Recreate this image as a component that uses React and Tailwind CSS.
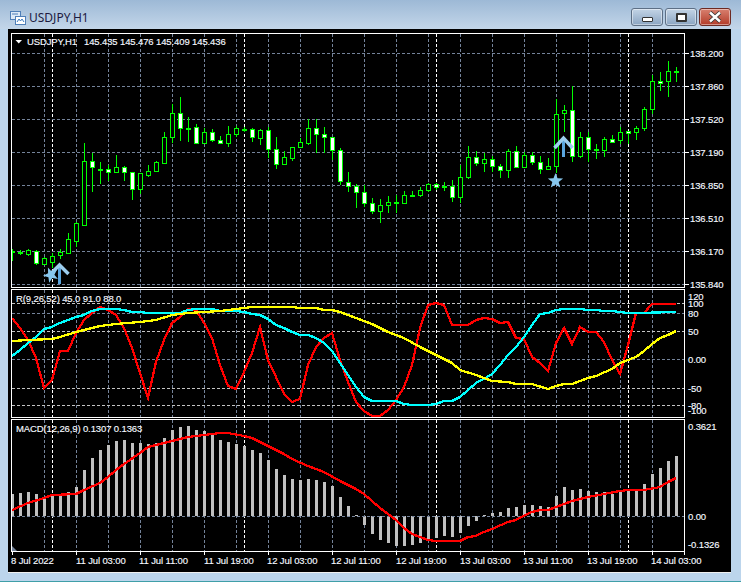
const FONT = { fontFamily: '"Liberation Sans", Arial, sans-serif' };

// high, low, body top, body bottom, type (1 white body, 0 hollow, 2 doji) - first candle at x=12, one every 8px
const candles = [
  [249,261,251,251,2],[250,255,252,253,2],[249,256,250,254,0],[250,265,251,263,1],[257,265,258,264,0],[253,268,256,262,0],
  [249,259,252,255,0],[233,253,239,253,0],[222,247,223,241,0],[143,226,161,225,0],[153,192,161,167,1],[162,184,169,169,2],
  [165,181,169,172,1],[155,173,167,172,0],[166,181,167,172,1],[172,200,172,189,1],[173,194,173,189,0],[165,177,171,175,0],
  [161,171,162,171,0],[132,163,137,163,0],[104,143,113,137,0],[97,141,113,128,1],[117,142,128,128,2],[124,144,127,143,1],
  [128,144,132,143,0],[129,142,132,140,1],[136,144,140,143,1],[126,147,134,143,0],[126,137,128,134,0],[127,132,129,129,2],
  [128,142,129,137,1],[129,145,130,138,0],[127,158,130,149,1],[137,169,149,164,1],[151,165,157,164,0],[147,161,147,158,0],
  [138,148,142,147,0],[119,145,128,143,0],[119,153,128,134,1],[127,153,134,137,1],[137,160,137,150,1],[148,185,150,181,1],
  [172,192,182,186,1],[184,208,186,192,1],[185,207,192,203,1],[198,214,203,211,1],[199,223,205,211,0],[196,213,202,205,0],
  [195,213,202,202,2],[191,204,195,203,0],[191,197,195,195,2],[187,197,190,195,0],[183,192,184,190,0],[183,190,184,187,1],
  [182,191,186,186,2],[180,202,186,197,1],[165,203,177,197,0],[146,179,157,177,0],[151,166,157,163,1],[153,172,159,163,0],
  [156,172,159,166,1],[164,178,166,170,1],[149,178,151,170,0],[146,167,151,167,1],[152,168,155,167,0],[152,165,155,162,1],
  [156,174,162,169,1],[158,169,166,169,0],[99,173,114,166,0],[105,132,110,113,0],[86,162,110,156,1],[132,158,137,156,0],
  [132,162,137,149,1],[144,159,149,149,2],[137,157,139,150,0],[135,143,139,142,1],[127,144,132,140,0],[131,144,131,133,1],
  [126,140,128,132,0],[107,131,109,128,0],[75,114,81,109,0],[72,91,81,83,1],[61,97,71,81,0],[67,82,71,71,2],
];

const red = "12,318 20,328 28,340 36,358 44,388 52,380 60,351 68,351 76,333 84,320 92,313 100,307 108,310 116,315 124,328 132,348 140,373 148,398 156,362 164,340 172,323 180,317 188,309 196,310 204,323 212,338 220,365 228,386 236,389 244,372 252,353 260,327 268,360 276,377 284,394 292,402 300,399 308,365 316,347 324,338 332,333 340,360 348,382 356,402 364,411 372,416 380,416 388,410 396,400 404,387 412,365 420,328 428,305 436,303 444,305 452,325 460,325 468,325 476,320 484,318 492,319 500,323 508,322 516,338 524,339 532,357 540,363 548,371 556,343 564,328 572,344 580,327 588,332 596,332 604,342 612,360 620,374 628,345 636,313 644,313 652,304 660,304 668,304 676,304";
const cyan = "12,356 20,350 28,343 36,337 44,329 52,327 60,323 68,320 76,317 84,315 92,311 100,309 108,309 116,309 124,310 132,312 140,312 148,313 156,313 172,313 180,313 188,310 196,309 212,309 220,311 236,311 244,312 252,314 260,315 268,319 276,325 284,328 292,332 300,335 308,335 316,338 324,343 332,351 340,363 348,375 356,387 364,397 372,401 396,401 404,404 412,405 428,405 436,404 444,401 452,401 460,397 468,390 476,383 484,379 492,374 500,365 508,355 516,347 524,337 532,325 540,314 548,313 556,310 564,309 580,309 588,310 596,310 604,311 612,311 620,312 628,313 636,313 676,312";
const yellow = "12,341 28,340 52,339 60,337 76,332 92,328 100,326 116,324 140,322 156,320 172,315 188,313 204,312 220,311 236,309 244,308 252,307 292,307 300,308 316,308 324,310 332,310 340,312 356,318 372,324 388,332 404,338 420,347 436,355 452,363 460,370 476,375 492,381 508,382 516,384 532,384 548,389 556,386 564,384 572,384 580,381 588,378 596,376 612,369 620,363 628,360 636,357 644,351 652,344 660,338 668,335 676,331";
const signal = "12,510 28,503 44,498 52,495 76,494 84,490 100,483 108,477 116,470 124,464 140,453 148,447 156,445 172,441 188,437 204,435 220,433 228,433 244,436 252,438 268,446 284,454 292,459 308,466 324,472 340,481 356,489 364,494 372,501 380,508 396,520 404,528 412,534 428,540 436,541 460,541 468,537 476,536 484,532 492,529 508,522 516,520 532,512 540,510 548,510 556,507 572,501 588,497 604,494 620,491 628,490 644,490 660,487 668,482 676,478";

// bar end in page y, zero line is y=516
const macd = [494,493,492,494,497,495,495,492,487,470,458,450,445,441,440,443,443,444,443,438,430,427,426,430,431,435,440,442,444,446,450,453,460,469,475,479,480,479,480,482,486,497,506,515,525,534,540,543,546,546,545,543,539,538,536,537,533,526,521,515,513,512,508,507,505,505,506,507,496,487,490,489,491,492,492,494,492,490,490,484,474,468,461,456];

const priceRows = [[53,"138.200"],[86,"137.860"],[119,"137.520"],[152,"137.190"],[185,"136.850"],[218,"136.510"],[251,"136.170"],[284,"135.840"]];
const vGrid = Array.from({ length: 20 }, (_, i) => 44 + i * 32);
const dayLines = [52, 244, 436, 628];
const timeLabels = [[11,"8 Jul 2022"],[76,"11 Jul 03:00"],[139,"11 Jul 11:00"],[204,"11 Jul 19:00"],[267,"12 Jul 03:00"],[331,"12 Jul 11:00"],[396,"12 Jul 19:00"],[460,"13 Jul 03:00"],[523,"13 Jul 11:00"],[587,"13 Jul 19:00"],[651,"14 Jul 03:00"]];
const ticks = [12, 76, 140, 204, 268, 332, 396, 460, 524, 588, 652, 684];

const GRAY = "#74839a";

function Grid({ y1, y2 }) {
  return (
    <g shapeRendering="crispEdges">
      {vGrid.map((x) => (
        <line key={x} x1={x + 0.5} x2={x + 0.5} y1={y1} y2={y2} stroke={GRAY} strokeDasharray="3 2" />
      ))}
      {dayLines.map((x) => (
        <line key={x} x1={x + 0.5} x2={x + 0.5} y1={y1} y2={y2} stroke="#ffffff" strokeDasharray="3 2" />
      ))}
    </g>
  );
}

function HLine({ y, color = GRAY }) {
  return <line x1={12} x2={684} y1={y + 0.5} y2={y + 0.5} stroke={color} strokeDasharray="3 2" shapeRendering="crispEdges" />;
}

function Label({ x, y, children }) {
  return (
    <text x={x} y={y + 3.5} fill="#f4f8ff" stroke="#f4f8ff" strokeWidth="0.15" fontSize="9.5" letterSpacing="-0.12" style={FONT}>
      {children}
    </text>
  );
}

function Frame({ top, bottom }) {
  return (
    <rect x={11.5} y={top + 0.5} width={673} height={bottom - top} fill="none" stroke="#ffffff" shapeRendering="crispEdges" />
  );
}

function Candle({ c, i }) {
  const x = 12 + i * 8;
  const [hi, lo, top, bot, type] = c;
  return (
    <g shapeRendering="crispEdges">
      <rect x={x} y={hi} width={1} height={lo - hi} fill="#00ff00" />
      {type === 2 ? (
        <rect x={Math.max(x - 2, 12)} y={top} width={x === 12 ? 3 : 5} height={2} fill="#00ff00" />
      ) : (
        <rect x={x - 1.5} y={top + 0.5} width={4} height={bot - top} fill={type === 1 ? "#ffffff" : "#000000"} stroke="#00ff00" />
      )}
    </g>
  );
}

function UpArrow({ x, tip, wing, end }) {
  return (
    <g fill="none">
      <rect x={x - 1} y={tip + 3} width={3} height={end - tip - 3} fill="#5aa5de" />
      <polyline points={`${x - 8.5},${wing} ${x + 0.5},${tip + 2} ${x + 9.5},${wing}`} stroke="#9ccdee" strokeWidth="3.5" />
    </g>
  );
}

function Star({ cx, cy, rot = 0 }) {
  const pts = [];
  for (let i = 0; i < 10; i++) {
    const r = i % 2 === 0 ? 8 : 3.4;
    const a = (Math.PI / 5) * i - Math.PI / 2 + rot;
    pts.push(`${(cx + r * Math.cos(a)).toFixed(1)},${(cy + r * Math.sin(a)).toFixed(1)}`);
  }
  return <polygon points={pts.join(" ")} fill="#87c7ee" />;
}

function MainPane() {
  return (
    <svg width="723" height="259" viewBox="8 29 723 259" className="block">
      <Grid y1={34} y2={287} />
      <g>{priceRows.map(([y]) => <HLine key={y} y={y} />)}</g>
      {candles.map((c, i) => <Candle key={i} c={c} i={i} />)}
      <UpArrow x={59} tip={263} wing={274} end={284} />
      <UpArrow x={563} tip={136} wing={148} end={157} />
      <Star cx={51} cy={275} rot={-0.4} />
      <Star cx={555.5} cy={181} />
      <Frame top={33} bottom={287} />
      <polygon points="15.5,40 22,40 18.75,43.5" fill="#ffffff" />
      <Label x={27} y={41}>USDJPY,H1</Label>
      <Label x={84} y={41}>145.435 145.476 145.409 145.436</Label>
      {priceRows.map(([y, t]) => (
        <g key={t}>
          <line x1={685} x2={689} y1={y + 0.5} y2={y + 0.5} stroke="#fff" shapeRendering="crispEdges" />
          <Label x={690} y={y}>{t}</Label>
        </g>
      ))}
    </svg>
  );
}

function IndicatorPane() {
  const levels = [[303,"#c4c4c4"],[313,GRAY],[331,"#c4c4c4"],[359,GRAY],[388,"#c4c4c4"],[405,"#c4c4c4"]];
  const labels = [[296,"120"],[303,"100"],[313,"80"],[331,"50"],[359,"0.00"],[388,"-50"],[405,"-80"],[410,"-100"]];
  return (
    <svg width="723" height="130" viewBox="8 288 723 130" className="block">
      <Grid y1={290} y2={417} />
      <g>{levels.map(([y, c]) => <HLine key={y} y={y} color={c} />)}</g>
      <g fill="none" strokeWidth="2.25" shapeRendering="crispEdges">
        <polyline points={red} stroke="#ff0000" />
        <polyline points={cyan} stroke="#00ffff" />
        <polyline points={yellow} stroke="#ffff00" />
      </g>
      <Frame top={289} bottom={417} />
      <Label x={16} y={298}>R(9,26,52) 45.0 91.0 88.0</Label>
      {labels.map(([y, t]) => <Label key={t} x={688} y={y}>{t}</Label>)}
    </svg>
  );
}

function MacdPane() {
  return (
    <svg width="723" height="154" viewBox="8 418 723 154" className="block">
      <Grid y1={420} y2={551} />
      <g shapeRendering="crispEdges" fill="#c0c0c0">
        {macd.map((y, i) => {
          const x = 12 + i * 8;
          return (
            <rect key={x} x={i === 0 ? 12 : x - 1} y={Math.min(y, 516)} width={i === 0 ? 2 : 3} height={Math.max(Math.abs(516 - y), 1)} />
          );
        })}
      </g>
      <HLine y={516} />
      <polyline points={signal} fill="none" stroke="#ff0000" strokeWidth="2.25" shapeRendering="crispEdges" />
      <polygon points="12,546 17,551 12,551" fill="#74839a" />
      <Frame top={419} bottom={551} />
      <Label x={16} y={428}>MACD(12,26,9) 0.1307 0.1363</Label>
      <Label x={688} y={426}>0.3621</Label>
      <Label x={688} y={516}>0.00</Label>
      <Label x={688} y={544}>-0.1326</Label>
      {ticks.map((x) => <rect key={x} x={x} y={552} width={1} height={3} fill="#fff" />)}
      {timeLabels.map(([x, t]) => <Label key={t} x={x} y={560}>{t}</Label>)}
    </svg>
  );
}

function WinButton({ className, children }) {
  return (
    <div className={`flex h-[18px] items-center justify-center rounded-[3px] border shadow-[inset_0_0_0_1px_rgba(255,255,255,0.45)] ${className}`}>
      {children}
    </div>
  );
}

export default function App() {
  return (
    <div className="flex h-[582px] w-[741px] flex-col overflow-hidden border-b border-[#3f9fa8] bg-[#bcd5ec]" style={FONT}>
      <div className="flex h-[29px] shrink-0 items-start justify-between bg-gradient-to-b from-[#9db9d6] to-[#c3d6e9] pl-[10px] pr-[10px]">
        <div className="flex items-center gap-[3px] pt-[10px]">
          <svg width="16" height="16" viewBox="0 0 16 16" className="shrink-0">
            <rect x="0.5" y="1.5" width="10" height="8" fill="#dce9f7" stroke="#4f7fb8" />
            <rect x="5.5" y="6.5" width="10" height="8" fill="#ffffff" stroke="#4f7fb8" />
            <path d="M7 12l2-3 1.5 2 1.5-2 2 3" fill="none" stroke="#3b7bc0" />
            <path d="M2 4h6" stroke="#4f7fb8" />
          </svg>
          <span className="text-[12px] leading-4 text-[#1d1b3f]" style={{ fontFamily: '"Noto Sans", sans-serif' }}>USDJPY,H1</span>
        </div>
        <div className="flex gap-[2px] pt-2">
          <WinButton className="w-[32px] border-[#5d6f85] bg-gradient-to-b from-[#c3d4e6] to-[#8ba5c2]">
            <div className="mt-[5px] h-[5px] w-[11px] rounded-[1px] border border-[#333] bg-white" />
          </WinButton>
          <WinButton className="w-[32px] border-[#5d6f85] bg-gradient-to-b from-[#c3d4e6] to-[#8ba5c2]">
            <div className="h-[9px] w-[11px] rounded-[1px] border-2 border-[#333] bg-white" />
          </WinButton>
          <WinButton className="w-[32px] border-[#6d2a22] bg-gradient-to-b from-[#d8806f] to-[#b23a28]">
            <svg width="14" height="12" viewBox="0 0 14 12">
              <path d="M2 1.5 L12 10.5 M12 1.5 L2 10.5" stroke="#333" strokeWidth="4" />
              <path d="M2 1.5 L12 10.5 M12 1.5 L2 10.5" stroke="#fff" strokeWidth="2.4" />
            </svg>
          </WinButton>
        </div>
      </div>
      <div className="flex flex-1 pl-[8px] pb-[8px]">
        <div className="flex h-[543px] w-[723px] flex-col bg-black shadow-[0_1px_0_#f0f0f0]">
          <MainPane />
          <IndicatorPane />
          <MacdPane />
        </div>
      </div>
    </div>
  );
}
